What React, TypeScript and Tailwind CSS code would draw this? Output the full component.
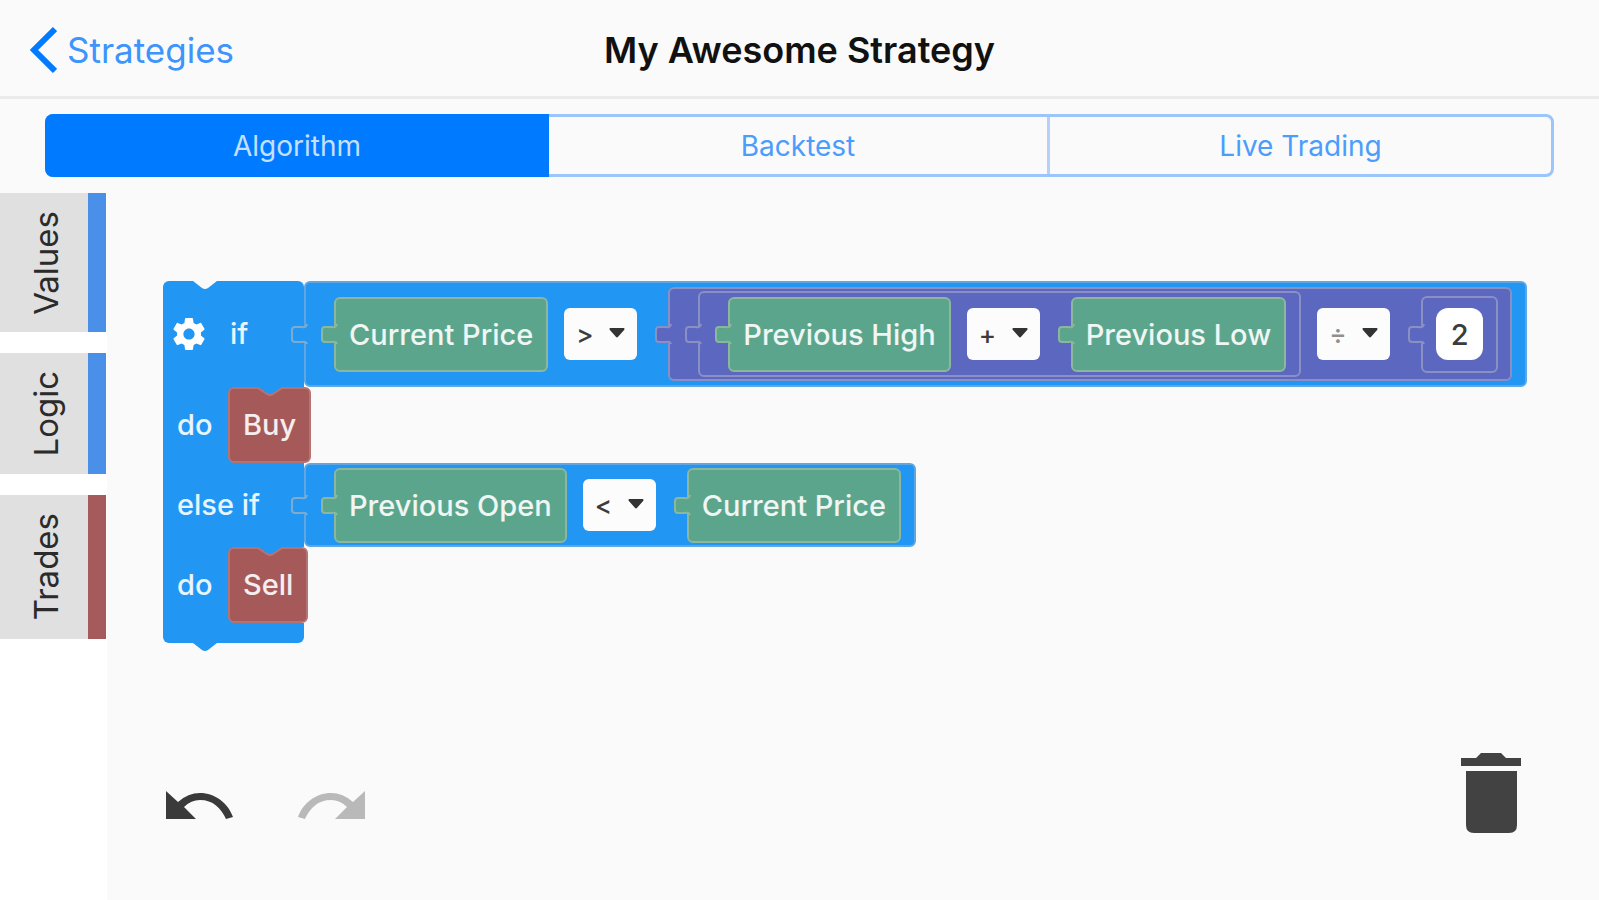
import { useState, type ReactNode } from 'react'
import clsx from 'clsx'

type Tone = 'logic' | 'math' | 'value'

const TONES: Record<Tone, { block: string; tab: string }> = {
  logic: { block: 'bg-[#2196f3] border-[#5fa6e2]', tab: 'fill-[#2196f3] stroke-[#7fabcf]' },
  math: { block: 'bg-[#5c68c0] border-[#8a8fc4]', tab: 'fill-[#5c68c0] stroke-[#8a8fc4]' },
  value: { block: 'bg-[#5ba58c] border-[#8cb79c]', tab: 'fill-[#5ba58c] stroke-[#8cb79c]' }
}

const MODES = ['Algorithm', 'Backtest', 'Live Trading']

const CATEGORIES = [
  { name: 'Values', height: 'h-[139px]', bar: 'bg-[#4a90e8]' },
  { name: 'Logic', height: 'h-[121px]', bar: 'bg-[#4a90e8]' },
  { name: 'Trades', height: 'h-[144px]', bar: 'bg-[#a55b5b]' }
]

function Block({ tone, className, children }: { tone: Tone; className?: string; children: ReactNode }) {
  return (
    <div className={clsx('relative flex items-center rounded-md border-2', TONES[tone].block, className)}>
      <svg
        className={clsx('absolute top-1/2 -left-4 -mt-[11px] h-[22px] w-[18px] stroke-2', TONES[tone].tab)}
        viewBox="0 0 18 22"
      >
        <path d="M17 1 Q16 5 12 4 H5 Q2 4 2 7 V16 Q2 19 5 19 H12 Q16 18 17 21" />
      </svg>
      {children}
    </div>
  )
}

function Value({ children }: { children: ReactNode }) {
  return (
    <Block tone="value" className="h-[75px] px-[13px] pt-0.5">
      <span className="whitespace-nowrap">{children}</span>
    </Block>
  )
}

function Operator({ label, value, options, muted }: { label: string; value: string; options: string[]; muted?: boolean }) {
  return (
    <div className="relative mx-4 h-[52px] w-[73px] shrink-0">
      <select
        aria-label={label}
        defaultValue={value}
        className={clsx(
          'h-full w-full appearance-none rounded-md bg-[#fcfcfc] pt-0.5 pl-3 text-[26px] leading-8',
          muted ? 'text-[#8f8f8f]' : 'text-[#3c3c3c]'
        )}
      >
        {options.map((option) => <option key={option}>{option}</option>)}
      </select>
      <svg className="pointer-events-none absolute top-5 right-3 h-2.5 w-4 fill-[#333]" viewBox="0 0 18 11">
        <path d="M1 0 H17 Q18 1 17 2 L10 10 Q9 11 8 10 L1 2 Q0 1 1 0Z" />
      </svg>
    </div>
  )
}

function Statement({ label, children }: { label: string; children: ReactNode }) {
  return (
    <div className="flex">
      <div className="flex w-[75px] items-center bg-[#2196f3] pl-[14px]">{label}</div>
      <div className="relative -ml-2.5 flex h-[76px] items-center rounded-md border-2 border-[#b57474] bg-[#a55959] px-[13px]">
        <svg className="absolute -top-0.5 left-7 h-[9px] w-6" viewBox="0 0 24 9">
          <path className="fill-[#2196f3]" d="M0 0 L9 7 Q12 9 15 7 L24 0Z" />
          <path className="fill-none stroke-[#b57474] stroke-2" d="M0 1 L9 7 Q12 9 15 7 L24 1" />
        </svg>
        {children}
      </div>
    </div>
  )
}

function GearIcon() {
  return (
    <svg className="h-8 w-8 fill-white" viewBox="2 2 20 20">
      <path d="M19.43 12.98c.04-.32.07-.64.07-.98s-.03-.66-.07-.98l2.11-1.65c.19-.15.24-.42.12-.64l-2-3.46c-.12-.22-.39-.3-.61-.22l-2.49 1c-.52-.4-1.08-.73-1.69-.98l-.38-2.65C14.46 2.18 14.25 2 14 2h-4c-.25 0-.46.18-.49.42l-.38 2.65c-.61.25-1.17.59-1.69.98l-2.49-1c-.23-.09-.49 0-.61.22l-2 3.46c-.13.22-.07.49.12.64l2.11 1.65c-.04.32-.07.65-.07.98s.03.66.07.98l-2.11 1.65c-.19.15-.24.42-.12.64l2 3.46c.12.22.39.3.61.22l2.49-1c.52.4 1.08.73 1.69.98l.38 2.65c.03.24.24.42.49.42h4c.25 0 .46-.18.49-.42l.38-2.65c.61-.25 1.17-.59 1.69-.98l2.49 1c.23.09.49 0 .61-.22l2-3.46c.12-.22.07-.49-.12-.64l-2.11-1.65zM12 15.5c-1.93 0-3.5-1.57-3.5-3.5s1.57-3.5 3.5-3.5 3.5 1.57 3.5 3.5-1.57 3.5-3.5 3.5z" />
    </svg>
  )
}

function ArrowIcon({ flipped }: { flipped?: boolean }) {
  return (
    <svg className={clsx('h-7 w-[67px]', flipped && '-scale-x-100')} viewBox="0 0 67 28">
      <path fill="currentColor" d="M0 0 L12 11 Q22 2 34 2 C49 2 62 12 67 26 L60 28 C55 17 47 9 34 9 Q25 9 18 16 L30 28 H0Z" />
    </svg>
  )
}

function IfBlock() {
  return (
    <div className="relative w-max text-[29px] leading-8 font-medium text-white/90">
      <svg className="absolute top-0 left-[30px] z-10 h-2 w-6 fill-[#fafafa]" viewBox="0 0 24 8">
        <path d="M0 0 L9 7 Q12 9 15 7 L24 0Z" />
      </svg>
      <div className="flex">
        <div className="flex w-[141px] items-center gap-[25px] rounded-t-md bg-[#2196f3] pl-[10px]">
          <button aria-label="Block settings"><GearIcon /></button>
          <span>if</span>
        </div>
        <Block tone="logic" className="h-[106px] pr-[13px] pl-7">
          <Value>Current Price</Value>
          <Operator label="Comparison" value=">" options={['>', '<', '=']} />
          <Block tone="math" className="ml-[15px] h-[94px] pr-3 pl-7">
            <Block tone="math" className="h-[86px] pr-[13px] pl-7">
              <Value>Previous High</Value>
              <Operator label="Sum" value="+" options={['+', '-', '×', '÷']} />
              <div className="ml-[15px]">
                <Value>Previous Low</Value>
              </div>
            </Block>
            <Operator label="Quotient" value="÷" options={['+', '-', '×', '÷']} muted />
            <Block tone="math" className="ml-[15px] h-[77px] px-[13px]">
              <input
                aria-label="Number"
                defaultValue="2"
                className="h-[52px] w-[47px] rounded-xl bg-white text-center text-[#3c3c3c]"
              />
            </Block>
          </Block>
        </Block>
      </div>
      <Statement label="do">Buy</Statement>
      <div className="flex">
        <div className="flex w-[141px] items-center bg-[#2196f3] pl-[14px]">else if</div>
        <Block tone="logic" className="h-[84px] pr-[13px] pl-7">
          <Value>Previous Open</Value>
          <Operator label="Comparison" value="<" options={['>', '<', '=']} />
          <div className="ml-[15px]">
            <Value>Current Price</Value>
          </div>
        </Block>
      </div>
      <Statement label="do">Sell</Statement>
      <div className="h-5 w-[141px] rounded-b-md bg-[#2196f3]"></div>
      <svg className="absolute top-full left-[30px] h-2 w-6 fill-[#2196f3]" viewBox="0 0 24 8">
        <path d="M0 0 L9 7 Q12 9 15 7 L24 0Z" />
      </svg>
    </div>
  )
}

export default function App() {
  const [mode, setMode] = useState('Algorithm')

  return (
    <div className="flex min-h-screen flex-col overflow-hidden bg-[#fafafa] font-['Inter',sans-serif]">
      <header className="grid h-[99px] grid-cols-[1fr_auto_1fr] items-center border-b-3 border-[#ebebeb] px-[30px] pt-1">
        <a href="#" className="flex items-center gap-2.5 text-[35px] leading-10 text-[#3d94fb]">
          <svg className="h-12 w-[27px] fill-none stroke-[#007aff] stroke-6" viewBox="0 0 27 48">
            <path d="M25 3 L4 24 L25 45" />
          </svg>
          Strategies
        </a>
        <h1 className="text-[36px] leading-10 font-semibold text-[#111]">My Awesome Strategy</h1>
      </header>

      <nav className="mx-[45px] mt-[15px] mb-4 grid h-[63px] grid-cols-3 rounded-lg border-3 border-[#9cc5fb]">
        {MODES.map((name) => (
          <button
            key={name}
            onClick={() => setMode(name)}
            className={clsx(
              'text-[28px] leading-8 first:rounded-l-lg last:rounded-r-lg',
              name === mode
                ? '-my-[3px] bg-[#007aff] text-[#c4e0ff] first:-ml-[3px] last:-mr-[3px]'
                : 'border-r-3 border-[#b5d0fc] text-[#4b9dfb] last:border-r-0'
            )}
          >
            {name}
          </button>
        ))}
      </nav>

      <div className="flex flex-1">
        <aside className="flex w-[107px] shrink-0 flex-col gap-[21px] bg-white pr-px">
          {CATEGORIES.map((category) => (
            <button key={category.name} className={clsx('flex w-full bg-[#e0e0e0]', category.height)}>
              <span className="flex h-full flex-1 items-center justify-center pl-1">
                <span className="rotate-180 text-[33px] leading-10 text-[#2b2b2b] [writing-mode:vertical-rl]">
                  {category.name}
                </span>
              </span>
              <span className={clsx('h-full w-[18px]', category.bar)}></span>
            </button>
          ))}
        </aside>

        <main className="flex min-w-0 flex-1 flex-col pt-[88px] pr-[78px] pb-[67px] pl-14">
          <IfBlock />
          <div className="mt-auto flex items-end justify-between">
            <div className="flex gap-[65px] pb-[14px] pl-[3px]">
              <button aria-label="Undo" className="text-[#3a3a3a]"><ArrowIcon /></button>
              <button aria-label="Redo" className="text-[#b9b9b9]"><ArrowIcon flipped /></button>
            </div>
            <button aria-label="Delete">
              <svg className="h-20 w-[60px] fill-[#424242]" viewBox="0 0 60 80">
                <path d="M0 5 H15 L20 0 H40 L45 5 H60 V13 H0Z" />
                <path d="M5 18 H56 V72 Q56 80 48 80 H13 Q5 80 5 72Z" />
              </svg>
            </button>
          </div>
        </main>
      </div>
    </div>
  )
}
